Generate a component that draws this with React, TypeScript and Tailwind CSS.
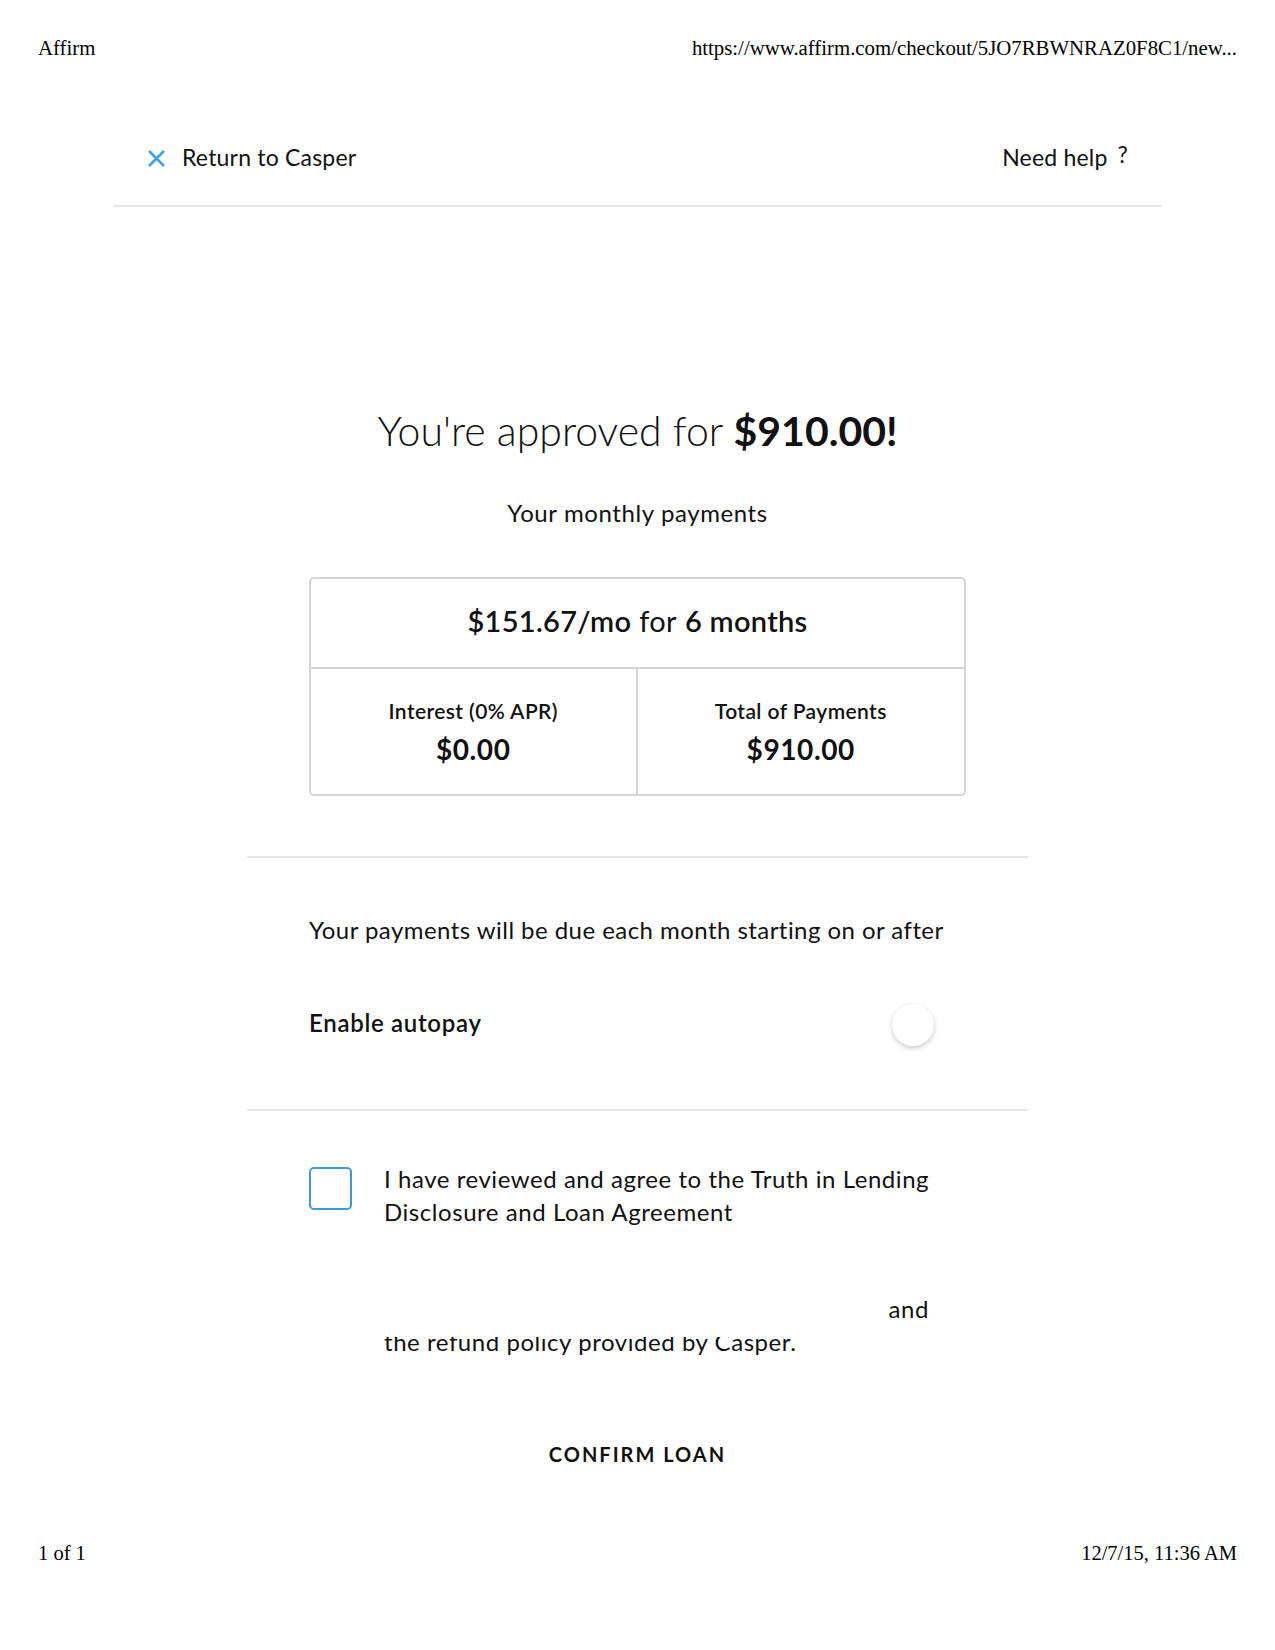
import React from "react";

const sans = { fontFamily: "Lato, 'Open Sans', Arial, sans-serif" };
const serif = { fontFamily: "'Liberation Serif', 'Times New Roman', serif" };

export default function App() {
  return (
    <div className="w-[1275px] h-[1650px] bg-white text-[#111] flex flex-col" style={sans}>
      <div className="flex justify-between items-center h-[96px] px-[38px] text-[20.8px] text-black" style={serif}>
        <span>Affirm</span>
        <span>https://www.affirm.com/checkout/5JO7RBWNRAZ0F8C1/new...</span>
      </div>

      <div className="mx-auto w-[1049px]">
        <div className="flex justify-between items-center pt-[46px] pb-[33px] px-[34px] border-b-2 border-[#e7e7e7]">
          <div className="flex items-center h-[30px]">
            <svg width="19" height="19" viewBox="0 0 19 19" className="mr-[16px] translate-y-[1px]">
              <path d="M2 2 L17 17 M17 2 L2 17" stroke="#3ea1e3" strokeWidth="2.6" strokeLinecap="butt" />
            </svg>
            <span className="text-[23px] leading-[30px] tracking-[0.2px]">Return to Casper</span>
          </div>
          <div className="flex items-center h-[30px] text-[23px] leading-[30px] tracking-[0.2px]">
            <span>Need help</span>
            <span className="ml-[10px] -translate-y-[3px]">?</span>
          </div>
        </div>
      </div>

      <div className="mx-auto w-[781px] flex flex-col">
        <h1 className="mt-[200px] text-center text-[41px] leading-[48px] font-light text-[#111]">
          You're approved for <span className="font-bold">$910.00!</span>
        </h1>
        <p className="mt-[43px] text-center text-[24px] leading-[30px] tracking-[0.6px]">Your monthly payments</p>

        <div className="mt-[49px] mx-auto w-[657px] border-2 border-[#d4d4d4] rounded-[5px]">
          <div className="h-[88px] pb-[4px] flex items-center justify-center text-[29px] tracking-[0.3px]">
            <span className="font-semibold">$151.67/mo</span>
            <span className="ml-[8px]">for</span>
            <span className="ml-[8px] font-semibold">6 months</span>
          </div>
          <div className="grid grid-cols-2 border-t-2 border-[#d4d4d4] h-[127px]">
            <div className="flex flex-col items-center pt-[30px] border-r-2 border-[#d4d4d4]">
              <span className="text-[21px] leading-[24px] font-semibold tracking-[0.4px]">Interest (0% APR)</span>
              <span className="mt-[10px] text-[28px] leading-[32px] font-bold tracking-[0.6px]">$0.00</span>
            </div>
            <div className="flex flex-col items-center pt-[30px]">
              <span className="text-[21px] leading-[24px] font-semibold tracking-[0.4px]">Total of Payments</span>
              <span className="mt-[10px] text-[28px] leading-[32px] font-bold tracking-[0.6px]">$910.00</span>
            </div>
          </div>
        </div>

        <div className="mt-[60px] border-t-2 border-[#e7e7e7]" />

        <div className="px-[62px]">
          <p className="mt-[57px] text-[24px] leading-[30px] tracking-[0.45px]">Your payments will be due each month starting on or after</p>
          <div className="mt-[59px] flex items-center justify-between h-[42px]">
            <span className="text-[24px] font-semibold tracking-[0.7px] -translate-y-[2px]">Enable autopay</span>
            <div className="w-[74px] h-[42px] flex items-center">
              <div className="w-[42px] h-[42px] rounded-full bg-white shadow-[0_2px_5px_rgba(0,0,0,0.22)]" />
            </div>
          </div>
        </div>

        <div className="mt-[63px] border-t-2 border-[#e7e7e7]" />

        <div className="px-[62px] mt-[51px] flex items-start">
          <div className="mt-[5px] w-[43px] h-[43px] shrink-0 rounded-[5px] border-2 border-[#3c9ad9]" />
          <div className="ml-[32px] w-[550px] text-[24px] leading-[33px] tracking-[0.55px]">
            <p>I have reviewed and agree to the Truth in Lending</p>
            <p>Disclosure and Loan Agreement</p>
            <div className="h-[64px]" />
            <p className="text-right pr-[5px]">and</p>
            <div className="mt-[12px] h-[21px] overflow-hidden">
              <p className="-mt-[12px]">the refund policy provided by Casper.</p>
            </div>
          </div>
        </div>

        <div className="mt-[84px] text-center text-[20px] leading-[24px] font-bold tracking-[2px]">CONFIRM LOAN</div>
      </div>

      <div className="mt-[72px] flex justify-between items-center h-[30px] px-[38px] text-[20.5px] text-black" style={serif}>
        <span>1 of 1</span>
        <span>12/7/15, 11:36 AM</span>
      </div>
    </div>
  );
}
